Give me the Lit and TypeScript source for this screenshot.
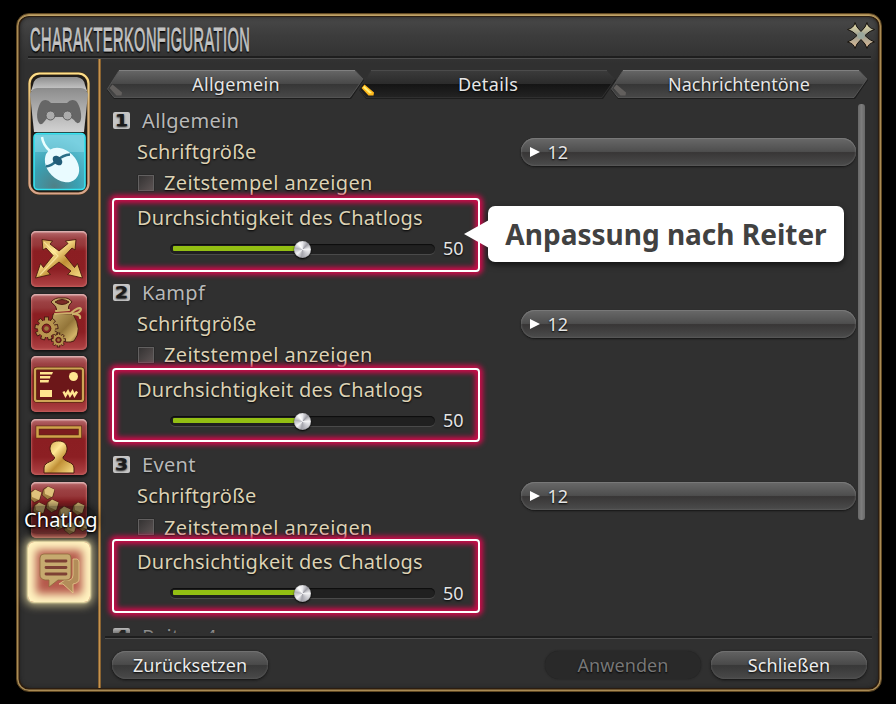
import { LitElement, html, css, svg, nothing } from "lit";
import { customElement, property } from "lit/decorators.js";
import { classMap } from "lit/directives/class-map.js";
import { styleMap } from "lit/directives/style-map.js";

const gold = svg`<defs>
  <linearGradient id="g" x1="0" y1="0" x2="1" y2="1">
    <stop offset="0" stop-color="#c4963d"/><stop offset=".35" stop-color="#ffe794"/>
    <stop offset=".6" stop-color="#c08f35"/><stop offset="1" stop-color="#fbe088"/>
  </linearGradient>
  <linearGradient id="b" x1="0" y1="0" x2="1" y2="1">
    <stop offset="0" stop-color="#c0a463"/><stop offset=".5" stop-color="#937539"/>
    <stop offset=".8" stop-color="#d3b468"/><stop offset="1" stop-color="#755525"/>
  </linearGradient>
</defs>`;

const gear = (cx: number, cy: number, r: number, teeth: number) => svg`
  <g stroke="#3c1210" stroke-width=".8">
    ${Array.from({ length: teeth }, (_, i) => svg`<rect x=${cx - r * 0.18} y=${cy - r} width=${r * 0.36} height=${r * 0.5}
      fill="#b08d49" transform=${`rotate(${(i * 360) / teeth} ${cx} ${cy})`}/>`)}
  </g>
  <circle cx=${cx} cy=${cy} r=${r * 0.58} fill="none" stroke="#b9964f" stroke-width=${r * 0.34}/>
  <circle cx=${cx} cy=${cy} r=${r * 0.38} fill="#8a2426" stroke="#4a1c12" stroke-width=".8"/>
  <circle cx=${cx} cy=${cy} r=${r * 0.2} fill="#9c7c40"/>`;

const cube = (x: number, y: number) => svg`
  <path d=${`M${x - 1} ${y - 6.5} l6.500 3 l-1.500 7 l-5.500 3 l-5.500 -4.500 l1.500 -6z`} fill="#a17f42" stroke="#40150f" stroke-width=".6"/>
  <path d=${`M${x - 1} ${y - 6.5} l6.500 3 l-2.500 7.500 l-7 -3 l-.5 -4z`} fill="#dfc27c"/>`;

const icons: Record<string, unknown> = {
  move: svg`<g fill="url(#g)" stroke="#4b1a0e" stroke-width=".9" stroke-linejoin="round">
    <path d="M11 8.500 L21.500 10 L19 13 L28 20 L37 12.500 L34.500 10 L45 8.500 L44 19 L41 17 L34 24.500 L43.500 36.500 L46.500 32.500 L51.500 47 L36.500 43.500 L40 40 L28 31 L16.500 40 L19.500 43.500 L4.500 47 L9.500 32.500 L12.500 36.500 L22 24.500 L15 17 L12 19z"/></g>
    <path d="M13 11 L27 25 L9 44" fill="none" stroke="#fff0a8" stroke-width="1.200" opacity=".7"/>`,
  bag: svg`<g stroke="#45160f" stroke-width=".9">
    <path d="M22 20 Q18 36 27 45 Q36 50 43 47 Q52 36 42 20z" fill="url(#b)"/>
    <path d="M20 8 Q24 3 31 4 Q38 3 41 8 Q36 12 38 16 L26 17 Q26 12 20 8z" fill="#c4a968"/>
    <path d="M24 8 Q31 3 38 8 Q31 13 24 8z" fill="#7a2c26"/></g>
    <path d="M24 20 L40 19 M40 19 Q48 12 50 15 Q50 19 41 20 Q50 20 49 24 M25 17 L38 16" fill="none" stroke="#cdb06a" stroke-width="2.200" stroke-linecap="round"/>
    ${gear(15.5, 34.5, 11.5, 9)}${gear(27.5, 46, 7, 8)}`,
  hud: svg`<rect x="4" y="12.500" width="48" height="32.500" rx="2" fill="#6c1719" stroke="#5a2a10" stroke-width="3.600"/>
    <rect x="4" y="12.500" width="48" height="32.500" rx="2" fill="none" stroke="#cfa555" stroke-width="2.200"/>
    <g fill="#ffe690"><path d="M9 16h13l-1 2.500H9z M9 20h10.500l-.5 2.500H9z M9 24h9l-.5 2.500H9z M9 34h12v7H9z"/>
    <circle cx="42.500" cy="20.500" r="4.500"/></g>
    <path d="M32.500 35.500 L34.500 39.500 L37 35.500 L39 39.500 L41.500 35.500 L43.500 39.500 L46 35.500" fill="none" stroke="#ffe690" stroke-width="2.400"/>`,
  person: svg`<rect x="6.500" y="8.500" width="42.500" height="9" fill="#7c1c1e" stroke="#5a2a10" stroke-width="3.800"/>
    <rect x="6.500" y="8.500" width="42.500" height="9" fill="none" stroke="#d0a24a" stroke-width="2.500"/>
    <path d="M27.500 22 C17 22 17 33 23.500 38 C24.500 43 13 42 13 49 V54 H43 V49 C43 42 31.500 43 32 38 C38 33 38 22 27.500 22z" fill="url(#g)" stroke="#4b1a0e"/>`,
  cubes: svg`${cube(5, 14)}${cube(18, 11)}${cube(9, 27)}${cube(22, 24)}${cube(34, 31)}${cube(48, 27)}${cube(28, 42)}${cube(40, 46)}${cube(53, 43)}`,
};

@customElement("side-icon")
class SideIcon extends LitElement {
  @property() kind = "";
  static styles = css`
    :host { display: block; width: 56px; height: 56px; }
    .tile {
      width: 56px; height: 56px; border-radius: 5px; overflow: hidden;
      background: linear-gradient(180deg, #b86c6e 0, #9c4143 8px, #96383a 14px, #8b1e22 20px, #8c1f23 38px, #b04446 100%);
      box-shadow: inset 0 1.5px 1px #dcb0b0, inset 0 0 3px #d87a78, 0 1px 3px 1px #111;
    }
    svg { display: block; }
  `;
  render() {
    return html`<div class="tile"><svg width="56" height="56" viewBox="0 0 56 56">${gold}${icons[this.kind] ?? nothing}</svg></div>`;
  }
}

@customElement("tab-button")
class TabButton extends LitElement {
  @property() label = "";
  @property({ type: Boolean }) active = false;
  static styles = css`
    :host { display: grid; width: 258px; height: 30px; }
    svg, .label { grid-area: 1 / 1; }
    .label {
      position: relative; text-align: center; line-height: 28px; font-size: 18px; color: #e6e6e6;
      text-shadow: 0 1px 2px #000; letter-spacing: 0.35px; padding-left: 2px;
    }
    .label.long { letter-spacing: 0; padding-left: 0; }
  `;
  render() {
    const a = this.active;
    return html`<svg width="258" height="30" viewBox="0 0 258 30">
      <defs><linearGradient id="t" x1="0" y1="0" x2="0" y2="1">
        <stop offset="0" stop-color=${a ? "#3b3b3b" : "#666"}/><stop offset=".5" stop-color=${a ? "#2b2b2b" : "#484848"}/>
        <stop offset=".51" stop-color=${a ? "#141414" : "#363636"}/><stop offset="1" stop-color=${a ? "#232323" : "#484848"}/>
      </linearGradient></defs>
      <path d="M13 1 H249 L258 10 L245 29 H8 L1 20z" fill="#161616" opacity=".7"/>
      <path d="M13 .5 H249 L257 9 L244 27.500 H8 L1.500 19z" fill="url(#t)" stroke=${a ? "#343434" : "#5c5c5c"} stroke-width=".8"/>
      <path d="M13 .5 H249" stroke=${a ? "#4b4b4b" : "#808080"}/>
      <path d="M6.500 14.500 L16 22.500 L15.500 25.500 H10.500 L3.500 18z" fill=${a ? "#ffb81c" : "#625f5d"}/>
      ${a ? svg`<path d="M6.500 16 L14 23 L11.500 23.500 L5 17.500z" fill="#fff07a"/>` : nothing}
    </svg><span class=${classMap({ label: true, long: this.label.length > 12 })}>${this.label}</span>`;
  }
}

@customElement("range-bar")
class RangeBar extends LitElement {
  @property({ type: Number }) value = 50;
  static styles = css`
    :host { display: flex; align-items: center; }
    .track {
      position: relative; width: 265px; height: 10px; box-sizing: border-box; padding: 3px 3px; border-radius: 5px;
      background: #202020; box-shadow: 0 1px 0 #4a4a4a, inset 0 1px 1px #0c0c0c;
    }
    .fill { height: 5px; background: #93bf13; border-radius: 1px; margin-top: -1px; }
    .knob {
      position: absolute; top: -3px; margin-left: -8.5px; width: 17px; height: 17px; border-radius: 50%;
      background: conic-gradient(#e8e8ec, #9c9ca4 12%, #f4f4f6 24%, #c9c9cf 38%, #a2a2aa 52%, #f4f4f6 64%, #b4b4bc 78%, #fff 90%, #e8e8ec);
      box-shadow: 0 1px 2px #000, inset 0 0 1px #666;
    }
    .num { margin: -1px 0 0 8.5px; font-size: 18px; color: #e4e4e4; text-shadow: 0 1px 2px #000; }
  `;
  render() {
    const w = styleMap({ width: `${this.value}%` });
    const l = styleMap({ left: `${this.value}%` });
    return html`<div class="track"><div class="fill" style=${w}></div><div class="knob" style=${l}></div></div>
      <span class="num">${this.value}</span>`;
  }
}

@customElement("chat-section")
class ChatSection extends LitElement {
  @property({ type: Number }) index = 1;
  @property() name = "";
  @property({ type: Number }) lift = 0;
  @property({ type: Boolean }) collapsed = false;
  static styles = css`
    :host { display: block; height: 172.3px; flex: none; }
    .head { display: flex; align-items: center; height: 30px; padding-left: 11px; color: #b8b8b8; font-size: 20px; text-shadow: 0 1px 2px #111; }
    .badge { display: block; width: 19px; height: 17px; margin-right: 11px; }
    .num { font: 700 15px "DejaVu Sans", sans-serif; }
    .row { display: flex; align-items: center; padding-left: 36px; height: 32px; font-size: 20px; color: #dcd2b5; text-shadow: 0 1px 2px #000; letter-spacing: 0.25px; }
    .text { flex: none; white-space: nowrap; }
    .row.size { padding-right: 22.5px; justify-content: space-between; }
    .row.stamp { letter-spacing: 0.38px; height: 31px; }
    .select {
      box-sizing: border-box; width: 335px; height: 28px; border-radius: 14px; display: flex; align-items: center;
      padding-left: 9px; font-size: 18px; letter-spacing: 0; color: #e4e4e4; margin-top: 1px;
      background: linear-gradient(#696969 0, #4e4e4e 48%, #383636 52%, #4c4c4c 100%);
      box-shadow: inset 0 1px 0 #787878, inset 0 0 2px #777, 0 1px 2px #151515;
    }
    .arrow { width: 0; height: 0; border: 5.5px solid transparent; border-left: 10px solid #fff; border-right: 0; margin-right: 8px; }
    .check { width: 14px; height: 14px; border: 1px solid #626060; box-sizing: content-box; background: linear-gradient(135deg, #353333, #5c5454); margin-right: 10px; margin-left: 1px; box-shadow: 0 0 1px #111; }
    .group { position: relative; height: 74px; }
    .frame {
      position: absolute; left: 11px; width: 368px; height: 74px; box-sizing: border-box;
      border: 2px solid #fff; border-radius: 4px;
      box-shadow: 0 0 5px 3px #d00b4b, inset 0 0 5px 3px #d00b4b;
    }
    .name { letter-spacing: 0.35px; }
    .opacity { height: 38px; }
    range-bar { margin-left: 68.5px; height: 25px; }
  `;
  render() {
    return html`
      <div class="head"><svg class="badge" width="19" height="17" viewBox="0 0 19 17">
        <rect x="1" y="0" width="17" height="17" rx="2" fill="#c6c6c6"/>
        <text class="num" x="7.300" y="13.800" text-anchor="middle" transform="scale(1.300 1)" fill="#1c1c1c">${this.index}</text></svg>
        <span class="name">${this.name}</span></div>
      ${this.collapsed ? nothing : html`
      <div class="row size"><span class="text">Schriftgröße</span><div class="select"><i class="arrow"></i>12</div></div>
      <div class="row stamp"><i class="check"></i><span class="text">Zeitstempel anzeigen</span></div>
      <div class="group">
        <div class="row opacity"><span class="text">Durchsichtigkeit des Chatlogs</span></div>
        <range-bar .value=${50}></range-bar>
        <div class="frame" style=${styleMap({ top: `${-this.lift}px` })}></div>
      </div>`}`;
  }
}

@customElement("app-root")
class AppRoot extends LitElement {
  static styles = css`
    :host { display: block; box-sizing: border-box; width: 896px; height: 704px; padding: 13px 14px 12px 16px; background: #000; font-family: "Noto Sans", sans-serif; overflow: hidden; }
    .window {
      box-sizing: border-box; height: 679px; display: flex; flex-direction: column; position: relative;
      border: 1px solid #5f4722; border-radius: 13px; padding: 3px;
      background: linear-gradient(#4a4a4a 0, #3c3c3c 22px, #303030 50px, #303030 100%);
      box-shadow: inset 0 0 0 1.5px #a98b55, inset 0 1.5px 0 0.5px #d7bd7c, inset 0 0 0 3px #2c1d10, inset 0 0 4px 3px #202020;
    }
    .bar { height: 39px; flex: none; display: flex; justify-content: space-between; padding: 0 3px 0 10px; }
    .title {
      font: 400 33px/39px "Liberation Sans", sans-serif; color: #c4c4c4; white-space: nowrap; width: 480px;
      -webkit-text-stroke: 0.9px #c4c4c4; letter-spacing: 1px;
      transform: scaleX(0.442); transform-origin: 0 50%; text-shadow: 0 2px 2px #000; padding-top: 3px; box-sizing: border-box;
    }
    .close { margin-top: 5px; }
    .rule { flex: none; height: 1px; border-top: 2px solid #1e1e1e; background: #4d4d4d; }
    .rule.top { margin: 0 7px 0 8px; }
    .body { flex: 1; display: flex; min-height: 0; }
    .side { width: 78px; flex: none; display: flex; flex-direction: column; align-items: center; position: relative; padding-top: 13px; box-sizing: border-box; }
    .line { width: 3px; background: linear-gradient(90deg, #6b4a22, #c59450 50%, #6b4a22); flex: none; }
    .switch { margin: 0 0 36px; flex: none; display: block; }
    .side side-icon { margin: 0 0 6.7px; flex: none; }
    .selected {
      width: 62px; height: 60px; border-radius: 6px; flex: none; margin-top: -2px; margin-left: -1px;
      background: #b65a4c;
      box-shadow: inset 0 0 9px 8px #fff3c0, 0 0 9px 4px #e8dba0b0, 0 0 2px 1px #fff3c0;
    }
    .tip { position: absolute; top: 447px; left: 4px; width: 73px; font-size: 20px; line-height: 28px; letter-spacing: 0.1px; color: #fff; border-radius: 14px; background: #08080870; box-shadow: 0 0 6px 2px #08080870; text-shadow: 0 0 3px #000, 0 1px 2px #000; text-align: center; white-space: nowrap; }
    .main { flex: 1; min-width: 0; display: flex; flex-direction: column; }
    .tabs { display: flex; padding: 11px 0 0 5px; height: 34px; flex: none; }
    .tabs tab-button { flex: none; margin-right: -6px; }
    .scroll { flex: none; height: 529px; overflow: hidden; display: flex; position: relative; }
    .list { flex: 1; display: flex; flex-direction: column; padding-top: 1px; height: 529px; overflow: hidden; box-sizing: border-box; }
    .thumb { position: absolute; right: 13px; top: 0; width: 7px; height: 416px; border-radius: 3px; background: linear-gradient(90deg, #686868, #7d7d7d, #686868); }
    .fade { position: absolute; left: 0; right: 0; bottom: 0; height: 6px; background: linear-gradient(#30303000, #30303080); }
    .rule.bottom { margin: 3px 6px 0 4px; }
    .foot { display: flex; align-items: flex-start; padding: 12px 11px 0 11px; gap: 10px; }
    .btn {
      box-sizing: border-box; width: 156px; height: 28px; border-radius: 14px; text-align: center; font-size: 18px; line-height: 28px; color: #ececec;
      background: linear-gradient(#636363 0, #4a4a4a 48%, #383838 52%, #4a4a4a 100%);
      box-shadow: inset 0 1px 0 #707070, inset 0 0 2px #666, 0 1px 3px #111; text-shadow: 0 1px 2px #000;
      letter-spacing: 0.08px;
    }
    .btn.off { margin-left: auto; background: #292929; color: #777; box-shadow: 0 0 2px #1c1c1c; }
    .callout {
      position: absolute; left: 471px; top: 192px; width: 356px; height: 56px; border-radius: 7px; background: #fff; color: #414141;
      font-weight: 700; font-size: 28px; line-height: 56px; text-align: center; box-shadow: 0 3px 6px #0009; white-space: nowrap;
    }
    .callout::before { content: ""; position: absolute; left: -24px; top: 14px; border: 14px solid transparent; border-right: 25px solid #fff; border-left: 0; }
  `;
  render() {
    const tabs = ["Allgemein", "Details", "Nachrichtentöne"];
    const sections = ["Allgemein", "Kampf", "Event", "Reiter 4"];
    return html`<div class="window">
      <div class="bar"><div class="title">CHARAKTERKONFIGURATION</div>
        <svg class="close" width="28" height="28" viewBox="0 0 28 28">
          <defs><linearGradient id="m" x1="0" y1="0" x2="0" y2="1"><stop offset="0" stop-color="#f3e6ae"/><stop offset=".5" stop-color="#9a9d90"/><stop offset="1" stop-color="#e4bd96"/></linearGradient></defs>
          <path d="M8 .5 Q9 5 14 9.500 Q19 5 20 .5 Q21 6 27.500 7.500 Q22 9 18 13.500 Q22 18 27.500 20 Q21 21.500 20 26.500 Q19 22 14 17.500 Q9 22 8 26.500 Q7 21.500 .5 20 Q6 18 10 13.500 Q6 9 .5 7.500 Q7 6 8 .5z" fill="url(#m)" stroke="#17130e" stroke-width="1"/>
          <circle cx="14" cy="13.500" r="3.500" fill="#9aa79c"/>
        </svg></div>
      <div class="rule top"></div>
      <div class="body">
        <div class="side">
          <svg class="switch" width="62" height="123" viewBox="0 0 62 123">
            <defs>
              <linearGradient id="fr" x1="0" y1="0" x2="0" y2="1"><stop offset="0" stop-color="#ffe08a"/><stop offset=".25" stop-color="#d9b478"/><stop offset="1" stop-color="#d8a58c"/></linearGradient>
              <linearGradient id="gr" x1="0" y1="0" x2="0" y2="1"><stop offset="0" stop-color="#8c8c8c"/><stop offset="1" stop-color="#d2d2d2"/></linearGradient>
              <linearGradient id="lid" x1="0" y1="0" x2="0" y2="1"><stop offset="0" stop-color="#8e8e8e"/><stop offset="1" stop-color="#cecece"/></linearGradient>
              <radialGradient id="cy" cx=".4" cy=".95" r=".9"><stop offset="0" stop-color="#4f8087"/><stop offset=".5" stop-color="#3aa0b2"/><stop offset="1" stop-color="#5fc3d6"/></radialGradient>
            </defs>
            <rect x="1.500" y="1.500" width="59" height="120" rx="10" fill="#201c18" stroke="#4a3518" stroke-width="3"/>
            <rect x="1.500" y="1.500" width="59" height="120" rx="10" fill="none" stroke="url(#fr)" stroke-width="2.200"/>
            <path d="M5 13 Q6 6 13 5 H49 Q56 6 57 13 L59 19 H3z" fill="url(#lid)"/>
            <path d="M2 22 Q4 16 9 16 H53 Q58 16 60 22 L56 60 H6z" fill="url(#gr)"/>
            <path d="M11 51 C7 45 10 33 14 29 Q19 26 23 31 H39 Q43 26 48 29 C52 33 55 45 52 50 Q49 53 46 48 L42 45 H20 L16 50 Q13 54 11 51z" fill="#666"/>
            <circle cx="22.500" cy="43.500" r="4.500" fill="#ababab" stroke="#5c5c5c"/><circle cx="39.500" cy="43.500" r="4.500" fill="#ababab" stroke="#5c5c5c"/>
            <rect x="6" y="61.500" width="51" height="56" rx="4" fill="url(#cy)" stroke="#35e4f0" stroke-width="1.600"/>
            <path d="M7 63 H56 V80 H7z" fill="#9fe4f0" opacity=".4"/>
            <path d="M14 65 Q15 73 22 79" fill="none" stroke="#eaffff" stroke-width="2.500"/>
            <ellipse cx="34" cy="93" rx="19.500" ry="14.500" transform="rotate(45 34 93)" fill="#e9fbff"/>
            <path d="M18 94 Q22 95 29 88.500 Q35 83 42 82.500" fill="none" stroke="#2b6f88" stroke-width="2.500"/>
            <ellipse cx="29.500" cy="88.500" rx="5.500" ry="4" transform="rotate(45 29.500 88.500)" fill="#225c78"/>
          </svg>
          ${["move", "bag", "hud", "person", "cubes"].map((k) => html`<side-icon .kind=${k}></side-icon>`)}
          <div class="selected"><svg width="62" height="60" viewBox="0 0 62 60">
            <path d="M45 17 H49 Q51 18 51 20 V37 Q51 41 45 42 L45 51 L35 42 H31 L37 38 H42 Q45 37 45 33z" fill="#b38d5a" stroke="#e6cd8e" stroke-width=".8"/>
            <path d="M16 12 H40 Q43 12 43 16 V33 Q43 38 38 38 H30 L21 45 V38 H17 Q12 37 12 33 V16 Q12 12 16 12z" fill="#c6aa6f" stroke="#8f6b3c" stroke-width=".8"/>
            <path d="M18 19 H38 M18 25.500 H38 M18 32 H38" stroke="#7d4034" stroke-width="2.800" stroke-linecap="round"/>
          </svg></div>
          <div class="tip">Chatlog</div>
        </div>
        <div class="line"></div>
        <div class="main">
          <div class="tabs">${tabs.map((t, i) => html`<tab-button .label=${t} .active=${i === 1}></tab-button>`)}</div>
          <div class="scroll">
            <div class="list">${sections.map((s, i) => html`<chat-section .index=${i + 1} .name=${s} .lift=${i * 2} .collapsed=${i === 3}></chat-section>`)}</div>
            <div class="thumb"></div><div class="fade"></div>
          </div>
          <div class="rule bottom"></div>
          <div class="foot"><div class="btn">Zurücksetzen</div><div class=${classMap({ btn: true, off: true })}>Anwenden</div><div class="btn">Schließen</div></div>
        </div>
      </div>
      <div class="callout">Anpassung nach Reiter</div>
    </div>`;
  }
}
